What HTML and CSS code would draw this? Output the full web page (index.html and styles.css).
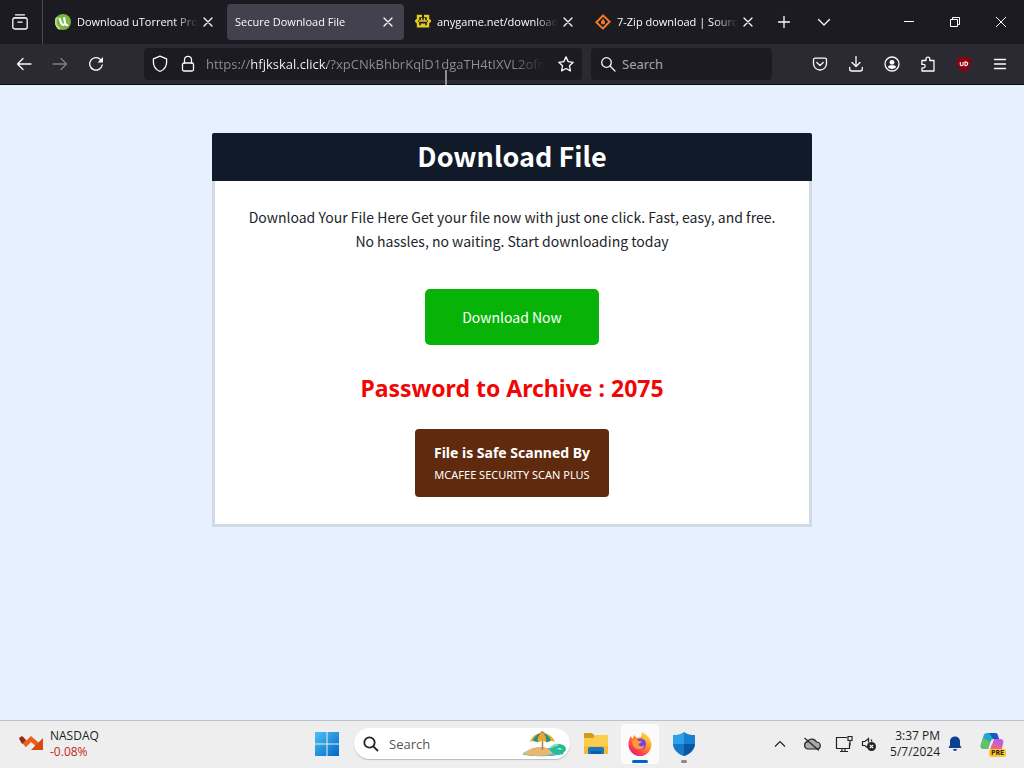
FILE: index.html
```html
<!DOCTYPE html>
<html lang="en">
<head>
    <meta charset="UTF-8" />
    <title>Secure Download File</title>
    <meta name="viewport" content="width=device-width, initial-scale=1" />
    <link rel="stylesheet" href="styles.css">
</head>
<body>
    <!-- Browser tabs -->
    <header class="tab-bar">
        <button class="view-btn" aria-label="Firefox View">
            <svg width="18" height="18" viewBox="0 0 18 18" class="line"><path d="M4.5 1.8h9M3 4.8h12"/><rect x="1.8" y="4.8" width="14.4" height="11.2" rx="2"/><path d="M7 9.2h4"/></svg>
        </button>
        <div class="tabs">
            <div class="tab">
                <svg width="16" height="16" viewBox="0 0 16 16"><circle cx="8" cy="8" r="8" fill="#76b83f"/><path d="M2 3.5A8 8 0 0 0 5 15" fill="none" stroke="#b9dd92" stroke-width="2"/><path d="M4.4 4l1.800 5.200c.8 2.400 4.200 1.900 3.800-.6L9 3.200M10 9.600c.6 1.400 1.700 1.700 3 1.200" fill="none" stroke="#fff" stroke-width="2.2"/></svg>
                <span class="tab-title">Download uTorrent Pro</span>
                <button class="tab-close" aria-label="Close tab"><svg width="10" height="10" viewBox="0 0 10 10" class="line"><path d="M1 1l8 8M9 1l-8 8"/></svg></button>
            </div>
            <div class="tab active">
                <span class="tab-title">Secure Download File</span>
                <button class="tab-close" aria-label="Close tab"><svg width="10" height="10" viewBox="0 0 10 10" class="line"><path d="M1 1l8 8M9 1l-8 8"/></svg></button>
            </div>
            <div class="tab">
                <svg width="16" height="16" viewBox="0 0 16 16" fill="none" stroke="#e3cb1c" stroke-width="2.4"><path d="M7 2H3v3.400L1 7l2 2v3.400h4V9.500M9 2h4v3.400L15 7l-2 2v3.400H9V9.500"/><path d="M4 7h8M6.600 4v3M9.400 4v3" stroke-width="1.400"/></svg>
                <span class="tab-title">anygame.net/download</span>
                <button class="tab-close" aria-label="Close tab"><svg width="10" height="10" viewBox="0 0 10 10" class="line"><path d="M1 1l8 8M9 1l-8 8"/></svg></button>
            </div>
            <div class="tab">
                <svg width="16" height="16" viewBox="0 0 16 16" fill="none" stroke="#f37b2a" stroke-width="2"><path d="M6.6 13.4L1.4 8.2 8 1.6l1.4 1M9.4 2.6L14.6 7.8 8 14.4l-1.4-1"/><path d="M8.2 4.6c.4 1.8 2 2.4 1.8 4.2-.2 2.2-3.8 2.2-4 0-.1-1.4.8-1.9 1.2-3" fill="#f37b2a" stroke="none"/></svg>
                <span class="tab-title">7-Zip download | Sourc</span>
                <button class="tab-close" aria-label="Close tab"><svg width="10" height="10" viewBox="0 0 10 10" class="line"><path d="M1 1l8 8M9 1l-8 8"/></svg></button>
            </div>
        </div>
        <button class="new-tab" aria-label="New tab"><svg width="14" height="14" viewBox="0 0 14 14" class="line"><path d="M7 1.500v11M1.500 7h11"/></svg></button>
        <button class="list-tabs" aria-label="List all tabs"><svg width="14" height="14" viewBox="0 0 14 14" class="line"><path d="M1.500 4.500L7 10l5.500-5.500"/></svg></button>
        <div class="window-buttons">
            <button aria-label="Minimize"><svg width="12" height="12" viewBox="0 0 12 12" class="thin"><path d="M1 5.500h10"/></svg></button>
            <button aria-label="Restore"><svg width="12" height="12" viewBox="0 0 12 12" class="thin"><path d="M1.500 3.500h7v7h-7zM3.500 3.500v-2h7v7h-2"/></svg></button>
            <button aria-label="Close"><svg width="12" height="12" viewBox="0 0 12 12" class="thin"><path d="M1 1l10 10M11 1L1 11"/></svg></button>
        </div>
    </header>

    <!-- Navigation toolbar -->
    <nav class="toolbar">
        <div class="nav-group">
            <button aria-label="Back"><svg width="16" height="16" viewBox="0 0 16 16" class="line"><path d="M15 8H1.500M7 2.500L1.500 8 7 13.500"/></svg></button>
            <button aria-label="Forward" class="dim"><svg width="16" height="16" viewBox="0 0 16 16" class="line"><path d="M1 8h13.500M9 2.500L14.500 8 9 13.500"/></svg></button>
            <button aria-label="Reload"><svg width="16" height="16" viewBox="0 0 16 16" class="line"><path d="M14.200 9A6.300 6.300 0 1 1 12.800 3.800"/><path d="M15 1v5.500H9.500z" fill="#fbfbfe" stroke="none"/></svg></button>
        </div>
        <div class="url-bar">
            <svg width="16" height="18" viewBox="0 0 16 18" class="line"><path d="M8 1.200l6.600 2.600v3.400c0 4-2.200 7.400-6.600 9.300-4.400-1.900-6.600-5.300-6.600-9.300V3.800z"/></svg>
            <svg width="16" height="18" viewBox="0 0 16 18" class="line"><rect x="2.500" y="8" width="11" height="8" rx="1.500"/><path d="M4.500 8V4.800a3.500 3.500 0 0 1 7 0V8"/></svg>
            <input class="url-input" type="text" aria-label="Address" value="https://hfjkskal.click/?xpCNkBhbrKqlD1dgaTH4tIXVL2ofn" />
            <button class="star-btn" aria-label="Bookmark this page"><svg width="16" height="16" viewBox="0 0 16 16" class="line"><path d="M8 .9l2.200 4.700 5 .7-3.700 3.500.9 5.100L8 12.500l-4.400 2.400.9-5.100L.8 6.300l5-.7z"/></svg></button>
        </div>
        <div class="search-bar">
            <svg width="16" height="16" viewBox="0 0 16 16" class="line"><circle cx="6.500" cy="6.500" r="4.800"/><path d="M10 10l5 5"/></svg>
            <input type="text" aria-label="Search the web" placeholder="Search" />
        </div>
        <div class="nav-group">
            <button aria-label="Save to Pocket"><svg width="16" height="16" viewBox="0 0 16 16" class="line"><path d="M3 2.200h10a1.500 1.500 0 0 1 1.500 1.500v3.800a6.500 6.500 0 0 1-13 0V3.700A1.500 1.500 0 0 1 3 2.200z"/><path d="M4.800 6.500L8 9.500l3.200-3"/></svg></button>
            <button aria-label="Downloads"><svg width="16" height="16" viewBox="0 0 16 16" class="line"><path d="M8 .5v10M4 6.500l4 4 4-4M1.700 11.500v1.500a2 2 0 0 0 2 2h8.600a2 2 0 0 0 2-2v-1.500"/></svg></button>
            <button aria-label="Account"><svg width="16" height="16" viewBox="0 0 16 16" class="line"><circle cx="8" cy="8" r="7"/><circle cx="8" cy="6.300" r="2.400" fill="#fbfbfe" stroke="none"/><path d="M3.800 11.200c.6-1.500 1.600-2 3-2h2.400c1.400 0 2.400.5 3 2A5.500 5.500 0 0 1 8 13a5.500 5.500 0 0 1-4.200-1.800z" fill="#fbfbfe" stroke="none"/></svg></button>
            <button aria-label="Extensions"><svg width="16" height="16" viewBox="0 0 16 16" class="line"><path d="M2 6V4.500h4V3a1.900 1.900 0 0 1 3.800 0v1.500H14V15H2v-3.200h1.500a1.500 1.500 0 0 0 0-3.400H1.800V6"/></svg></button>
            <button aria-label="uBlock Origin"><svg width="16" height="16" viewBox="0 0 16 16"><path d="M8 0c2 1.500 4.500 2 7 2 .5 7-1 11-7 14C2 13 .5 9 1 2 3.500 2 6 1.500 8 0z" fill="#8c0010"/><path d="M4.300 6v2.600c0 1.500 2.800 1.500 2.800 0V6M9 5.800v3.800c3.600.4 3.600-3.800 0-3.800z" fill="none" stroke="#fff" stroke-width="1.100"/></svg></button>
            <button aria-label="Application menu"><svg width="16" height="16" viewBox="0 0 16 16" class="line"><path d="M2.500 3.500h11M2.500 8h11M2.500 12.500h11"/></svg></button>
        </div>
        <svg class="cursor" width="8" height="18" viewBox="0 0 8 18"><path d="M4 0v16M1 16.500h2M5 16.500h2" fill="none" stroke="#fff"/></svg>
    </nav>

    <!-- Page -->
    <main class="page">
        <section class="card">
            <h1>Download File</h1>
            <div class="card-body">
                <p>Download Your File Here Get your file now with just one click. Fast, easy, and free. No hassles, no waiting. Start downloading today</p>
                <button class="download-btn">Download Now</button>
                <h2>Password to Archive : 2075</h2>
                <div class="scan-badge">
                    <strong>File is Safe Scanned By</strong>
                    <span>MCAFEE SECURITY SCAN PLUS</span>
                </div>
            </div>
        </section>
    </main>

    <!-- Taskbar -->
    <footer class="taskbar">
        <div class="widget">
            <svg width="24" height="18" viewBox="0 0 24 18"><path d="M2 3l5 6 5-5 7 6" fill="none" stroke="#e8601c" stroke-width="4.500"/><path d="M0 3l3-2 4 4-4 4z" fill="#8f2b12"/><path d="M24 3v12H12z" fill="#d9480f"/></svg>
            <div class="widget-text">
                <span>NASDAQ</span>
                <span class="down">-0.08%</span>
            </div>
        </div>
        <div class="apps">
            <button aria-label="Start"><svg width="24" height="24" viewBox="0 0 24 24">
                <defs><linearGradient id="win" x1="0" y1="0" x2="24" y2="24" gradientUnits="userSpaceOnUse"><stop offset="0" stop-color="#4cc2f5"/><stop offset="1" stop-color="#0067c8"/></linearGradient></defs>
                <path d="M0 0h11.500v11.500H0zM12.500 0H24v11.500H12.500zM0 12.500h11.500V24H0zM12.500 12.500H24V24H12.500z" fill="url(#win)"/></svg></button>
            <div class="task-search">
                <svg width="16" height="16" viewBox="0 0 16 16" fill="none" stroke="#222" stroke-width="1.800"><circle cx="6.500" cy="6.500" r="5.200"/><path d="M10.300 10.300L15 15"/></svg>
                <input type="text" aria-label="Search Windows" placeholder="Search" />
                <svg width="44" height="26" viewBox="0 0 44 26">
                    <path d="M0 23c6 3 30 3 42 0l-6-6H14z" fill="#3fb4dc"/>
                    <path d="M1 22c7-4 10-6 18-6 7 0 7 2 13 6-6 4-26 4-31 0z" fill="#e8b673"/>
                    <path d="M20.500 3v16" stroke="#a7825a" stroke-width="1.500"/>
                    <path d="M8 11C10 5 15 2 20 2s11 3 13 9l-4-1.500-4 2-4.500-2-4.500 2-4-2z" fill="#e9a82c"/>
                    <path d="M11 10c1-4 4-7 8-8-3 3-4 6-3 9zM24 11c1-4-1-7-3-9 4 1 7 4 8 8z" fill="#20947e"/>
                    <path d="M18 2l2-2 3 2z" fill="#d86b44"/>
                    <ellipse cx="36" cy="18" rx="6" ry="3" fill="none" stroke="#24bd91" stroke-width="4"/>
                    <path d="M29 17c1-2 4-3 7-3" fill="none" stroke="#86e6bf" stroke-width="2"/>
                </svg>
            </div>
            <button aria-label="File Explorer"><svg width="26" height="24" viewBox="0 0 26 24"><path d="M1 2a1 1 0 0 1 1-1h7l3 3v5H1z" fill="#d39b16"/><path d="M1 6h9l3-3h11a1 1 0 0 1 1 1v18H1z" fill="#fccc4d"/><path d="M1 14h24v8H1z" fill="#f8bd37"/><path d="M5 22v-5a2 2 0 0 1 2-2h12a2 2 0 0 1 2 2v5z" fill="#1676c5"/><path d="M8 19h10v3H8z" fill="#0e5ba3"/></svg></button>
            <button aria-label="Firefox" class="app-open"><svg width="24" height="24" viewBox="0 0 24 24">
                <defs><linearGradient id="fox" x1="20" y1="2" x2="4" y2="22" gradientUnits="userSpaceOnUse"><stop offset="0" stop-color="#ffe14a"/><stop offset=".4" stop-color="#ff9429"/><stop offset=".75" stop-color="#ff4050"/><stop offset="1" stop-color="#e21c78"/></linearGradient></defs>
                <path d="M3 4l1.500 3L6 3l3 3c1.500-.5 3-1 4-1l1-5c6 3 9.500 7.500 9.500 12.500A11.500 11.500 0 0 1 12 24 11.500 11.500 0 0 1 .5 12.500C.5 9 1.500 6 3 4z" fill="url(#fox)"/>
                <circle cx="12.500" cy="12" r="5.500" fill="#7542e5"/><path d="M4 9c3-2 5-1 7 0l3 .5c-1 2-3 1.500-3.500 3 1 2.500 4 2 6 .5-1 4-4 5-7 4-4-1-5-4-5.500-8z" fill="#ff9b36"/></svg></button>
            <button aria-label="Windows Security" class="app-idle"><svg width="24" height="24" viewBox="0 0 24 24"><path d="M12 0c3 2.500 7 3 11 3v8c0 6-5 10.500-11 13z" fill="#1380d4"/><path d="M12 0C9 2.500 5 3 1 3v8c0 6 5 10.500 11 13z" fill="#2f9fe8"/><path d="M12 12h11c-.5 6-5 10-11 12z" fill="#0b55a5"/><path d="M1 12h11v12C6 22 1.500 18 1 12z" fill="#1678c9"/></svg></button>
        </div>
        <div class="tray">
            <button aria-label="Show hidden icons"><svg width="12" height="12" viewBox="0 0 12 12" class="dark"><path d="M1 8.500l5-5 5 5"/></svg></button>
            <button aria-label="OneDrive"><svg width="18" height="16" viewBox="0 0 18 16" class="dark"><path d="M5 13a3.700 3.700 0 0 1-.5-7.300A5 5 0 0 1 13.500 6a3.500 3.500 0 0 1 .5 7z" fill="#aaa"/><path d="M1.500 2L16 14.500"/></svg></button>
            <button class="net-btn" aria-label="Network and volume">
                <svg width="18" height="18" viewBox="0 0 18 18" class="dark"><path d="M12 2.500H1.500v11h13V8M5 16.500h8M7 13.500v3M10 13.500v3M13 1.500h4v4h-4zM15 5.500v5"/></svg>
                <svg width="16" height="16" viewBox="0 0 16 16" class="dark"><path d="M6 11.500L4 9.500H1.500v-4H4l3.500-3v4M10 3.500l1 2"/><circle cx="10.500" cy="10.500" r="4.500" fill="#222" stroke="none"/><path d="M8.800 8.800l3.400 3.400M12.200 8.800l-3.400 3.400" stroke="#fff"/></svg>
            </button>
            <div class="clock">
                <span>3:37 PM</span>
                <span>5/7/2024</span>
            </div>
            <button class="bell-btn" aria-label="Notifications"><svg width="14" height="16" viewBox="0 0 14 16"><path d="M7 .5c3 0 5 2.200 5 5v3.500l1.500 3H.5L2 9V5.500c0-2.800 2-5 5-5zM5 13h4c0 2.500-4 2.500-4 0z" fill="#0a3f94"/></svg></button>
            <button class="copilot" aria-label="Copilot">
                <svg width="24" height="24" viewBox="0 0 24 24"><path d="M7 1h8c2 0 2.500 1 3 3l1 3h-5c-2 0-3 1-3.500 3L8 17H4c-3 0-4-2-3-5l2.500-8C4 2 5 1 7 1z" fill="#20a8c4"/><path d="M1 12l2-6 7 4-2 7H4c-3 0-4-2-3-5z" fill="#66c163"/><path d="M9 1h6c2 0 2.500 1 3 3l1 3h-6z" fill="#1b58c4"/><path d="M14 7h6c3 0 4 2 3 5l-2.500 8c-.5 2-2 3-4 3H9l4-13c.5-2 1-2 1-3z" fill="#c65cd8"/><path d="M10 18l2-6 10 3-2 6z" fill="#f0637b"/></svg>
                <span>PRE</span>
            </button>
        </div>
    </footer>
</body>
</html>
```
FILE: styles.css
```css
* {
    box-sizing: border-box;
}
html, body {
    height: 100%;
    margin: 0;
}
body {
    display: flex;
    flex-direction: column;
    font-family: "Noto Sans", "Open Sans", sans-serif;
    font-size: 12px;
    background: #e6f0ff;
}
button, input {
    font: inherit;
    color: inherit;
    border: none;
    background: none;
    padding: 0;
    margin: 0;
}
button {
    display: flex;
    align-items: center;
    justify-content: center;
}
input {
    min-width: 0;
    outline: none;
}
svg {
    flex: none;
}
.line {
    fill: none;
    stroke: #fbfbfe;
    stroke-width: 1.3;
    stroke-linejoin: round;
    stroke-linecap: round;
}
.thin {
    fill: none;
    stroke: #fff;
    stroke-width: 1;
}
.dark {
    fill: none;
    stroke: #222;
    stroke-width: 1.2;
}

/* Tabs */
.tab-bar {
    display: flex;
    align-items: center;
    flex: none;
    height: 44px;
    background: #1c1b22;
    color: #fbfbfe;
}
.view-btn {
    width: 43px;
    height: 44px;
    padding-right: 2px;
    border-right: 1px solid #4a4953;
}
.tabs {
    display: flex;
    gap: 3px;
    margin-left: 4px;
    min-width: 0;
}
.tab {
    display: flex;
    align-items: center;
    gap: 6px;
    width: 177px;
    min-width: 0;
    height: 36px;
    padding: 0 8px;
    border-radius: 4px;
}
.tab.active {
    background: #42414d;
}
.tab-title {
    flex: 1;
    overflow: hidden;
    white-space: nowrap;
    font-family: "Open Sans", sans-serif;
    font-size: 11px;
    line-height: 16px;
    -webkit-mask-image: linear-gradient(to left, transparent, #000 24px);
    mask-image: linear-gradient(to left, transparent, #000 24px);
}
.tab-close {
    width: 16px;
    height: 20px;
    margin-left: -4px;
}
.new-tab, .list-tabs {
    width: 40px;
    height: 36px;
}
.window-buttons {
    display: flex;
    margin-left: auto;
}
.window-buttons button {
    width: 46px;
    height: 44px;
}

/* Toolbar */
.toolbar {
    position: relative;
    display: flex;
    align-items: center;
    flex: none;
    height: 41px;
    padding: 0 6px;
    background: #2b2a33;
    border-bottom: 1px solid #0c0c0d;
    color: #fbfbfe;
}
.nav-group {
    display: flex;
}
.nav-group button {
    width: 36px;
    height: 32px;
}
.dim {
    opacity: 0.4;
}
.url-bar, .search-bar {
    display: flex;
    align-items: center;
    height: 32px;
    border-radius: 4px;
    background: #1c1b22;
    font-size: 13px;
}
.url-bar {
    flex: 1;
    gap: 12px;
    margin-left: 30px;
    padding: 0 8px;
    min-width: 0;
}
.url-input {
    flex: 1;
    margin-left: -2px;
    font-family: "Open Sans", sans-serif;
    color: #8f8f9d;
    /* domain in white, rest grey, fading out at the end */
    background: linear-gradient(to right, #8f8f9d 45px, #fbfbfe 45px, #fbfbfe 121px, #8f8f9d 121px);
    -webkit-background-clip: text;
    background-clip: text;
    -webkit-text-fill-color: transparent;
    -webkit-mask-image: linear-gradient(to left, transparent, #000 36px);
    mask-image: linear-gradient(to left, transparent, #000 36px);
}
.search-bar {
    gap: 6px;
    width: 181px;
    margin: 0 30px 0 9px;
    padding: 0 9px;
}
.search-bar input {
    flex: 1;
}
.search-bar input::placeholder {
    color: #a5a5ae;
    opacity: 1;
}
.cursor {
    position: absolute;
    left: 442px;
    top: 26px;
}

/* Page */
.page {
    flex: 1;
    padding: 48px 16px;
    font-family: "Noto Sans CJK SC", sans-serif;
    color: #212529;
}
.card {
    max-width: 600px;
    margin: 0 auto;
    text-align: center;
}
.card h1 {
    margin: 0;
    padding-bottom: 2px;
    border-radius: 2px 2px 0 0;
    background: #111a28;
    color: #fff;
    font-size: 27px;
    line-height: 46px;
}
.card-body {
    display: flex;
    flex-direction: column;
    align-items: center;
    padding: 24px 24px 27px;
    border: 3px solid #d0d9e4;
    border-top: none;
    background: #fff;
}
.card-body p {
    margin: 0 0 36px;
    font-size: 14px;
    line-height: 24px;
}
.download-btn {
    height: 56px;
    padding: 0 37px;
    border-radius: 5px;
    background: #07b307;
    color: #fff;
    font-size: 14px;
    cursor: pointer;
}
.card-body h2 {
    margin: 27px 0 25px;
    font-family: "Noto Sans", "Open Sans", sans-serif;
    font-size: 23px;
    line-height: 32px;
    color: #f20505;
}
.scan-badge {
    display: flex;
    flex-direction: column;
    padding: 13px 19px 11px;
    border-radius: 4px;
    background: #602a0e;
    color: #fff;
    font-family: "Noto Sans", "Open Sans", sans-serif;
    line-height: 22px;
}
.scan-badge strong {
    font-size: 14px;
}
.scan-badge span {
    font-size: 11px;
}

/* Taskbar */
.taskbar {
    display: grid;
    grid-template-columns: 1fr auto 1fr;
    align-items: center;
    flex: none;
    height: 48px;
    padding: 0 10px 2px 0;
    border-top: 1px solid #bcc0c8;
    background: #eeeeef;
    color: #222;
    font-family: "Open Sans", sans-serif;
    line-height: 16px;
}
.widget {
    display: flex;
    align-items: center;
    gap: 7px;
    padding-left: 19px;
}
.widget-text, .clock {
    display: flex;
    flex-direction: column;
    font-size: 12px;
}
.widget-text, .clock, .tray {
    white-space: nowrap;
}
.down {
    color: #c42b1c;
}
.apps {
    display: flex;
    align-items: center;
    margin-right: 3px;
}
.apps button {
    width: 44px;
    height: 40px;
    position: relative;
}
.task-search {
    display: flex;
    align-items: center;
    gap: 10px;
    width: 216px;
    height: 31px;
    margin: 0 4px 0 5px;
    padding: 0 4px 0 9px;
    border-radius: 16px;
    background: #fff;
    box-shadow: 0 1px 1px #bbb;
    font-size: 13px;
}
.task-search input {
    flex: 1;
}
.task-search input::placeholder {
    color: #555;
    opacity: 1;
}
.apps .app-open {
    width: 38px;
    margin: 0 3px;
    border-radius: 4px;
    background: #fbfbfc;
}
.app-open::after, .app-idle::after {
    content: "";
    position: absolute;
    bottom: 1px;
    width: 16px;
    height: 3px;
    border-radius: 2px;
    background: #0067c0;
}
.app-idle::after {
    width: 6px;
    background: #888;
}
.tray {
    display: flex;
    align-items: center;
    justify-content: flex-end;
}
.tray button {
    width: 32px;
    height: 40px;
}
.tray .net-btn {
    width: 50px;
    gap: 8px;
    padding-left: 6px;
}
.clock {
    width: 62px;
    text-align: right;
}
.tray .bell-btn {
    width: 30px;
}
.tray .copilot {
    position: relative;
    width: 44px;
}
.copilot span {
    position: absolute;
    right: 8px;
    bottom: 7px;
    padding: 0 2px;
    border-radius: 2px;
    background: #ffc629;
    font-size: 7px;
    font-weight: bold;
    line-height: 8px;
}
```
